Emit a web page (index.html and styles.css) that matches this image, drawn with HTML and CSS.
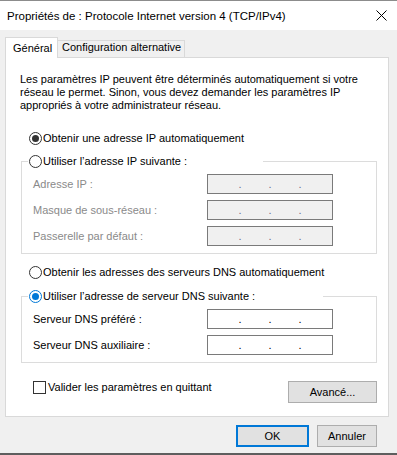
FILE: index.html
```html
<!DOCTYPE html>
<html lang="fr">
<head>
<meta charset="utf-8">
<title>Propriétés de : Protocole Internet version 4 (TCP/IPv4)</title>
<link rel="stylesheet" href="styles.css">
</head>
<body>
<div class="window">
  <div class="titlebar">
    <span class="title">Propriétés de : Protocole Internet version 4 (TCP/IPv4)</span>
    <svg class="close" width="11" height="11" viewBox="0 0 11 11" aria-label="Fermer"><path d="M0.5 0.5L10.5 10.5M10.5 0.5L0.5 10.5" stroke="#000" stroke-width="1" fill="none"/></svg>
  </div>
  <div class="tabs">
    <div class="tab active">Général</div>
    <div class="tab">Configuration alternative</div>
  </div>
  <div class="panel">
    <p class="intro">Les paramètres IP peuvent être déterminés automatiquement si votre<br>réseau le permet. Sinon, vous devez demander les paramètres IP<br>appropriés à votre administrateur réseau.</p>

    <div class="option first"><span class="radio checked"></span><span>Obtenir une adresse IP automatiquement</span></div>

    <fieldset class="group first-group">
      <legend class="legend ip"><span class="legend-inner"><span class="radio"></span><span>Utiliser l’adresse IP suivante :</span></span></legend>
      <div class="fields disabled">
        <span class="label">Adresse IP :</span>
        <div class="ipbox off"><span></span><span class="dot">.</span><span></span><span class="dot">.</span><span></span><span class="dot">.</span><span></span></div>
        <span class="label">Masque de sous-réseau :</span>
        <div class="ipbox off"><span></span><span class="dot">.</span><span></span><span class="dot">.</span><span></span><span class="dot">.</span><span></span></div>
        <span class="label">Passerelle par défaut :</span>
        <div class="ipbox off"><span></span><span class="dot">.</span><span></span><span class="dot">.</span><span></span><span class="dot">.</span><span></span></div>
      </div>
    </fieldset>

    <div class="option dnsauto"><span class="radio"></span><span>Obtenir les adresses des serveurs DNS automatiquement</span></div>

    <fieldset class="group second-group">
      <legend class="legend dns"><span class="legend-inner"><span class="radio checked focus"></span><span>Utiliser l’adresse de serveur DNS suivante :</span></span></legend>
      <div class="fields">
        <span class="label">Serveur DNS préféré :</span>
        <div class="ipbox"><span></span><span class="dot">.</span><span></span><span class="dot">.</span><span></span><span class="dot">.</span><span></span></div>
        <span class="label">Serveur DNS auxiliaire :</span>
        <div class="ipbox"><span></span><span class="dot">.</span><span></span><span class="dot">.</span><span></span><span class="dot">.</span><span></span></div>
      </div>
    </fieldset>

    <div class="bottomrow">
      <div class="check"><span class="box"></span><span>Valider les paramètres en quittant</span></div>
      <button class="btn advanced">Avancé...</button>
    </div>
  </div>
  <div class="footer">
    <button class="btn ok">OK</button>
    <button class="btn cancel">Annuler</button>
  </div>
</div>
</body>
</html>
```

FILE: styles.css
```css
* { box-sizing: border-box; }
html, body { margin: 0; padding: 0; }
body {
  width: 397px;
  height: 455px;
  overflow: hidden;
  font-family: "Liberation Sans", Arial, sans-serif;
  font-size: 11px;
  color: #000;
  background: #f0f0f0;
}
.window {
  height: 455px;
  display: flex;
  flex-direction: column;
  border-top: 1px solid #8c8c8c;
  border-bottom: 2px solid #5e5e5e;
  background: #f0f0f0;
}
.titlebar {
  height: 29px;
  flex: none;
  background: #fff;
  display: flex;
  align-items: center;
  justify-content: space-between;
  padding: 0 10px 0 7px;
}
.title { font-size: 11.5px; }
.close { display: block; }

.tabs {
  display: flex;
  align-items: flex-end;
  height: 20px;
  margin: 7px 0 0 5px;
  flex: none;
}
.tab {
  height: 17px;
  width: 127px;
  line-height: 13px;
  padding-left: 4px;
  border-top: 1px solid #d9d9d9;
  border-right: 1px solid #d9d9d9;
  background: #f0f0f0;
  white-space: nowrap;
}
.tab.active {
  width: 53px;
  height: 21px;
  margin-bottom: -1px;
  line-height: 20px;
  padding-left: 7px;
  border-left: 1px solid #d9d9d9;
  background: #fff;
  position: relative;
  z-index: 1;
}

.panel {
  flex: none;
  margin: 0 8px 0 5px;
  background: #fff;
  border: 1px solid #d9d9d9;
  padding: 15px 11px 13px 14px;
}
.intro { margin: 0; line-height: 13px; white-space: nowrap; }

.option {
  display: flex;
  align-items: center;
  height: 13px;
  line-height: 13px;
  margin-left: 9px;
  white-space: nowrap;
}
.option.first { margin-top: 20px; }
.option.dnsauto { margin-top: 12px; }

.radio {
  flex: none;
  width: 13px;
  height: 13px;
  border: 1px solid #333;
  border-radius: 50%;
  background: #fff;
  display: flex;
  align-items: center;
  justify-content: center;
  margin-right: 1px;
}
.radio.checked::after {
  content: "";
  width: 7px;
  height: 7px;
  border-radius: 50%;
  background: #333;
}
.radio.focus { border-color: #0078d7; }
.radio.focus::after { background: #0078d7; }

.group {
  margin: 0 0 0 1px;
  padding: 0;
  border: 1px solid #dcdcdc;
  min-width: 0;
}
.first-group { margin-top: 10px; }
.second-group { margin-top: 11px; }
.legend {
  margin-left: 6px;
  padding: 0 0 0 1px;
  height: 13px;
  line-height: 13px;
  background: #fff;
}
.legend.ip { width: 235px; }
.legend.dns { width: 295px; }
.legend-inner {
  display: flex;
  align-items: center;
  height: 13px;
  white-space: nowrap;
}

.fields {
  display: grid;
  grid-template-columns: 174px 126px;
  row-gap: 6px;
  align-items: center;
  padding: 6px 0 7px 11px;
}
.label { line-height: 13px; white-space: nowrap; }
.fields.disabled .label { color: #8a8a8a; }

.ipbox {
  height: 20px;
  border: 1px solid #7a7a7a;
  background: #fff;
  display: grid;
  grid-template-columns: 30px 4px 26px 4px 26px 4px 30px;
  line-height: 18px;
  color: #000;
}
.ipbox.off { background: #f0f0f0; color: #6d6d8a; }
.dot { text-align: center; }

.bottomrow {
  display: flex;
  justify-content: space-between;
  align-items: flex-start;
  margin-top: 18px;
}
.check {
  display: flex;
  align-items: center;
  margin: 0 0 0 13px;
  height: 13px;
  line-height: 13px;
  white-space: nowrap;
}
.box {
  width: 13px;
  height: 13px;
  border: 1px solid #333;
  background: #fff;
  margin-right: 2px;
  flex: none;
}

.btn {
  height: 22px;
  padding: 0;
  border: 1px solid #adadad;
  background: #e1e1e1;
  font-family: inherit;
  font-size: 11px;
  color: #000;
  border-radius: 0;
}
.advanced { width: 89px; }
.footer {
  display: flex;
  justify-content: flex-end;
  gap: 8px;
  margin: 8px 20px 0 0;
  flex: none;
}
.ok { width: 73px; border: 2px solid #0078d7; }
.cancel { width: 60px; }
```
